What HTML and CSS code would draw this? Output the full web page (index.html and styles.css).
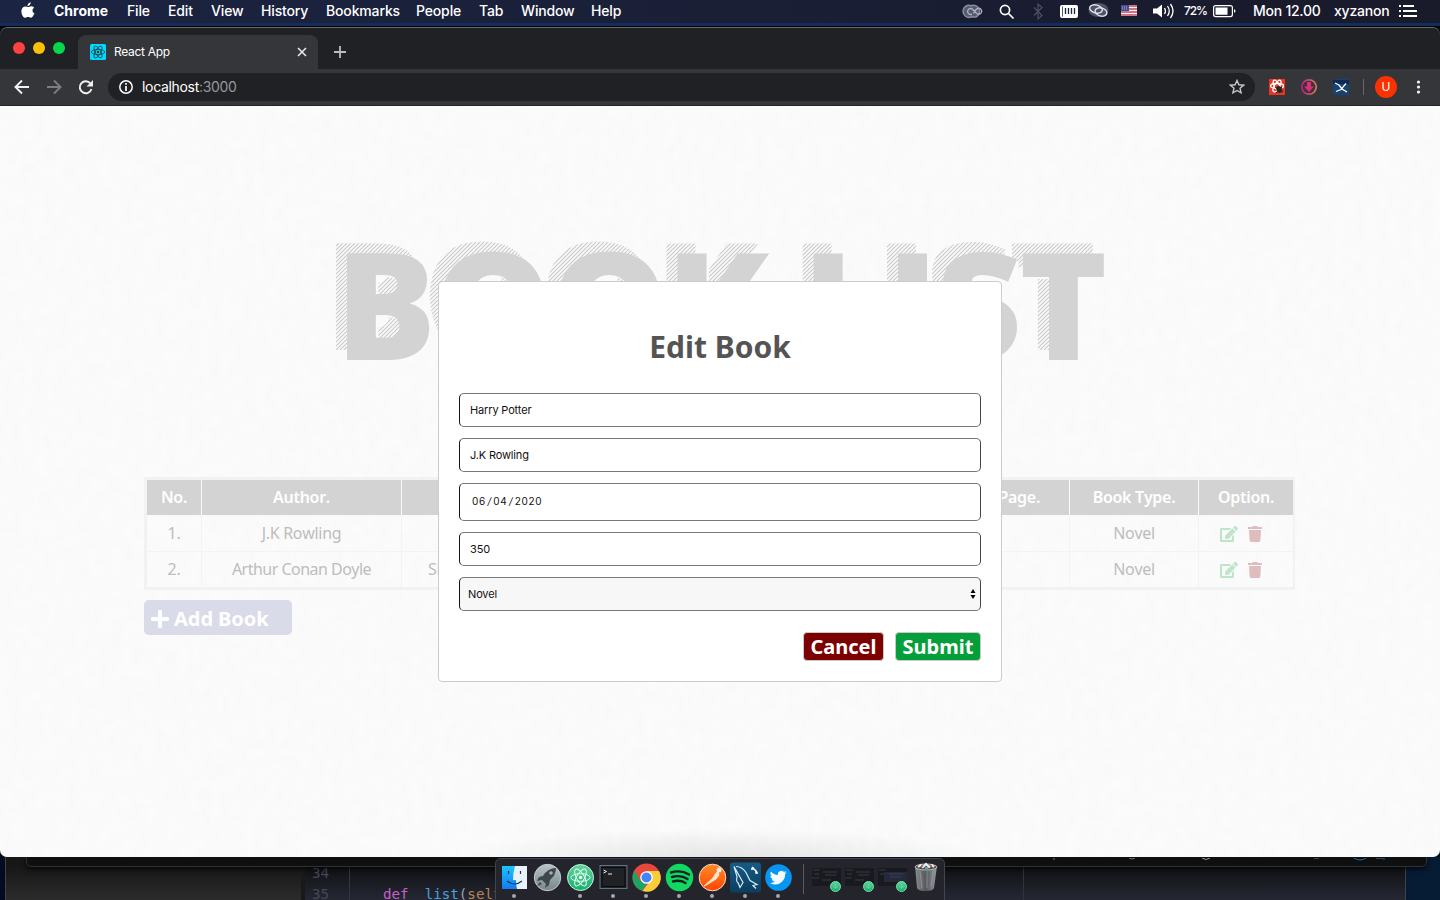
FILE: index.html
```html
<!DOCTYPE html>
<html lang="en">
<head>
<meta charset="utf-8">
<title>React App</title>
<link rel="stylesheet" href="styles.css">
</head>
<body>
<svg class="defs" width="0" height="0">
  <defs>
    <symbol id="edit" viewBox="0 0 576 512"><path d="M402.600 83.200l90.200 90.200c3.800 3.800 3.800 10 0 13.800L274.400 405.600l-92.800 10.300c-12.400 1.400-22.900-9.100-21.500-21.500l10.300-92.800L388.800 83.200c3.800-3.800 10-3.800 13.800 0zm162-22.900l-48.800-48.800c-15.200-15.200-39.900-15.200-55.200 0l-35.400 35.400c-3.800 3.800-3.800 10 0 13.800l90.200 90.200c3.800 3.800 10 3.800 13.800 0l35.400-35.400c15.200-15.300 15.200-40 0-55.200zM384 346.200V448H64V128h229.800c3.200 0 6.200-1.300 8.500-3.500l40-40c7.600-7.600 2.200-20.500-8.500-20.500H48C21.500 64 0 85.500 0 112v352c0 26.500 21.500 48 48 48h352c26.500 0 48-21.500 48-48V306.200c0-10.700-12.900-16-20.500-8.500l-40 40c-2.200 2.300-3.500 5.300-3.500 8.500z"/></symbol>
    <symbol id="trash" viewBox="0 0 448 512"><path d="M432 32H312l-9.400-18.700A24 24 0 0 0 281.100 0H166.800a23.700 23.700 0 0 0-21.400 13.300L136 32H16A16 16 0 0 0 0 48v32a16 16 0 0 0 16 16h416a16 16 0 0 0 16-16V48a16 16 0 0 0-16-16zM53.200 467a48 48 0 0 0 47.900 45h245.800a48 48 0 0 0 47.900-45L416 128H32z"/></symbol>
    <symbol id="atom" viewBox="-12 -12 24 24"><g fill="none" stroke="currentColor"><ellipse rx="10" ry="4"/><ellipse rx="10" ry="4" transform="rotate(60)"/><ellipse rx="10" ry="4" transform="rotate(120)"/></g><circle r="1.800" fill="currentColor"/></symbol>
    <linearGradient id="silver" x2="0" y2="1"><stop stop-color="#b7c3c5"/><stop offset="1" stop-color="#79868a"/></linearGradient>
    <linearGradient id="green" x2="0" y2="1"><stop stop-color="#60d59c"/><stop offset="1" stop-color="#15ae6c"/></linearGradient>
    <linearGradient id="orange" x2="0" y2="1"><stop stop-color="#ff8b28"/><stop offset="1" stop-color="#ff4600"/></linearGradient>
    <linearGradient id="blue" x2="0" y2="1"><stop stop-color="#155b87"/><stop offset="1" stop-color="#0b3e5f"/></linearGradient>
    <linearGradient id="finder" x2="0" y2="1"><stop stop-color="#19c6ff"/><stop offset="1" stop-color="#147bf0"/></linearGradient>
    <linearGradient id="can"><stop stop-color="#8b8e90"/><stop offset=".5" stop-color="#55585b"/><stop offset="1" stop-color="#9a9d9f"/></linearGradient>
    <linearGradient id="ring"><stop stop-color="#bd1e83"/><stop offset="1" stop-color="#d7775b"/></linearGradient>
  </defs>
</svg>

<header class="menubar">
  <svg class="apple" viewBox="0 0 14 17"><path fill="#fff" d="M9.700.300c.1 1-.3 1.900-.9 2.600-.6.700-1.400 1.200-2.300 1.100-.1-.9.300-1.800.9-2.500C8 .800 8.900.400 9.700.300zM12.800 12.600c-.7 1.500-1.700 3.200-3 3.200-1 0-1.400-.7-2.700-.7s-1.700.7-2.700.7C2 15.800.300 12.200.400 9c.1-2.900 1.900-4.600 3.900-4.600 1.200 0 2 .7 2.900.7.800 0 1.700-.8 3.200-.8 1.100 0 2.100.5 2.700 1.500-2.400 1.500-2 4.700.5 5.600z"/></svg>
  <nav class="menus">
    <b class="m1">Chrome</b><span class="m2">File</span><span class="m3">Edit</span><span class="m4">View</span><span class="m5">History</span><span class="m6">Bookmarks</span><span class="m7">People</span><span class="m8">Tab</span><span class="m9">Window</span><span>Help</span>
  </nav>
  <svg class="status" viewBox="0 0 280 23">
    <g fill="none" stroke="#8b8e9e"><path fill="#565b70" stroke-width="1.500" d="M9 5.700A6 6 0 1 0 9 17h5a6 6 0 1 0-5-11.300z"/><path stroke="#b0b2bf" stroke-width="1.300" d="M10 14.500H8.500a3 3 0 1 1 2-5.300l4.500 4.500a3 3 0 1 0 .5-5.200c-2 .5-3 3.500-4 5"/></g>
    <g fill="none" stroke="#fff" stroke-width="1.700"><circle cx="43" cy="10" r="4.600"/><path d="M46.500 13.500l5 5"/></g>
    <path d="M72 7.500l8 8-4 3.500V4l4 3.500-8 8" fill="none" stroke="#4b5065" stroke-width="1.200"/>
    <rect x="98" y="5" width="18" height="13" rx="2" fill="#fff"/><path d="M103.500 8v6m3-6v6m3-6v6m3-6v6" stroke="#20243a" stroke-width="1.300"/><path d="M100.500 6.500v10" stroke="#555b6d"/>
    <ellipse cx="136.500" cy="10" rx="10" ry="7" fill="#4d5365"/><g fill="none" stroke="#e2e4ed" stroke-width="1.400"><ellipse cx="134" cy="9" rx="6.500" ry="4" transform="rotate(15 134 9)"/><ellipse cx="139" cy="12" rx="6" ry="4" transform="rotate(15 139 12)"/></g>
    <path fill="#f4f2f6" d="M159 5h16v11h-16z"/><path d="M159 6h16m-16 3h16m-16 3h16m-16 3h16" stroke="#c44b5d" stroke-width="1.500"/><path fill="#434d8f" d="M159 5h8v6h-8z"/><path d="M160 7h6m-6 2h6" stroke="#a9afd4" stroke-dasharray="1"/>
    <path fill="#fff" d="M191 8.500h4l5-4v13l-5-4h-4z"/><path d="M202.500 8q2 3 0 6m3-8q3.500 5 0 10m3-12q5 7 0 14" stroke="#fff" stroke-width="1.300" fill="none"/>
    <text x="222" y="15" textLength="24">72%</text>
    <rect x="251.600" y="5.600" width="18.800" height="11" rx="2" fill="none" stroke="#fff" stroke-width="1.200"/><path fill="#fff" d="M253.500 7.500h12v7.300h-12zM272 9c2 1 2 3 0 4z"/>
  </svg>
  <span class="clock">Mon 12.00</span><span class="user">xyzanon</span>
  <svg class="list" viewBox="0 0 20 14"><path d="M1 2h2m-2 5h2m-2 5h2M5 2h11M5 7h14M5 12h14" stroke="#fff" stroke-width="2"/></svg>
</header>

<main class="window">
  <div class="tabs">
    <div class="lights"><i></i><i></i><i></i></div>
    <div class="tab"><svg class="favicon" viewBox="0 0 16 16"><rect width="16" height="16" rx="1.500" fill="#00d8ff"/><use href="#atom" color="#222" width="16" height="16"/></svg><span>React App</span><svg class="close" viewBox="0 0 10 10"><path d="M1 1l8 8M9 1L1 9" stroke="#e7e8ea" stroke-width="1.600"/></svg></div>
    <svg class="plus" viewBox="0 0 12 12"><path d="M6 0v12M0 6h12" stroke="#b9bdc1" stroke-width="1.800"/></svg>
  </div>
  <div class="toolbar">
    <svg class="navs" viewBox="0 0 82 20"><g fill="none" stroke="#f1f1f1" stroke-width="1.900"><path d="M15 10H2m6-6.500L1.500 10 8 16.500"/><path stroke="#7c7d80" d="M33 10h13m-6-6.500l6.500 6.500-6.500 6.500"/><path d="M77.500 12a6 6 0 1 1-1-5.500"/></g><path fill="#f1f1f1" d="M79 3v6.500h-6.500z"/></svg>
    <div class="address"><svg class="info" viewBox="0 0 14 14"><circle cx="7" cy="7" r="6.200" fill="none" stroke="#fff" stroke-width="1.500"/><path d="M7 3v1.700M7 6v5" stroke="#fff" stroke-width="1.700"/></svg><span>localhost<em>:3000</em></span><svg class="star" viewBox="0 0 16 16"><path d="M8 1.500l1.900 4.300 4.700.4-3.600 3 1.100 4.700L8 11.500l-4.100 2.400L5 9.200l-3.600-3 4.700-.4z" fill="none" stroke="#c5c6c8" stroke-width="1.400"/></svg></div>
    <svg class="extensions" viewBox="0 0 184 30">
      <g transform="translate(14 7)"><rect width="16" height="16" fill="#eb3323"/><g fill="none" stroke="#fff" stroke-width="1.300"><ellipse cx="8" cy="7" rx="6.500" ry="2.500"/><ellipse cx="8" cy="7" rx="6.500" ry="2.500" transform="rotate(60 8 7)"/><ellipse cx="8" cy="7" rx="6.500" ry="2.500" transform="rotate(120 8 7)"/></g><ellipse cx="10" cy="10.500" rx="2.800" ry="3.600" fill="#252525" transform="rotate(-25 10 10)"/><path d="M6 8l8 5m-7 1l6-6" stroke="#252525"/></g>
      <circle cx="54" cy="15" r="7.200" fill="none" stroke="url(#ring)" stroke-width="1.700"/><path d="M52 10h4v4.500h3L54 20l-5-5.500h3z" fill="#df2c79"/>
      <g transform="translate(78 7)"><rect width="16" height="16" rx="1" fill="#164373"/><path d="M0 1h16v4H0z" fill="#0c2958"/><path d="M2 4l4 2 3 4 5 3M3 12.500l5-2 5-6" stroke="#fff" stroke-width="1.300" fill="none"/></g>
      <path d="M108.500 7v16" stroke="#66676b"/><circle cx="131" cy="15" r="11" fill="#fb3100"/><text x="131" y="19" text-anchor="middle">U</text>
      <g fill="#f4f4f4"><circle cx="163.500" cy="10" r="1.600"/><circle cx="163.500" cy="15" r="1.600"/><circle cx="163.500" cy="20" r="1.600"/></g>
    </svg>
  </div>
  <section class="page">
    <svg class="paper"><filter id="grain"><feTurbulence type="fractalNoise" baseFrequency=".09 .07" numOctaves="5" seed="4"/><feColorMatrix values="0 0 0 0 .6  0 0 0 0 .6  0 0 0 0 .6  .08 0 0 0 -.025"/></filter><rect width="100%" height="100%" filter="url(#grain)"/></svg>
    <svg class="title" viewBox="0 0 800 150" role="heading" aria-label="Book List">
      <pattern id="hatch" width="4" height="4" patternUnits="userSpaceOnUse"><path d="M-1 1l2-2M0 4l4-4M3 5l2-2" stroke="#c9c9c9" stroke-width="1.150"/></pattern>
      <text x="4.500" y="120" textLength="772" fill="url(#hatch)">BOOK LIST</text>
      <text x="18" y="132" textLength="772" fill="#fafafa">BOOK LIST</text>
      <text x="15.500" y="130" textLength="772" fill="#d3d3d3">BOOK LIST</text>
    </svg>
    <div class="table">
      <div class="row head"><span>No.</span><span>Author.</span><span></span><span class="count">Total Page.</span><span>Book Type.</span><span>Option.</span></div>
      <div class="row"><span>1.</span><span>J.K Rowling</span><span></span><span></span><span>Novel</span><span class="options"><svg class="edit"><use href="#edit"/></svg><svg class="trash"><use href="#trash"/></svg></span></div>
      <div class="row last"><span>2.</span><span class="author">Arthur Conan Doyle</span><span class="name">Sherlock Holmes</span><span></span><span>Novel</span><span class="options"><svg class="edit"><use href="#edit"/></svg><svg class="trash"><use href="#trash"/></svg></span></div>
    </div>
    <div class="add"><svg viewBox="0 0 18 18"><path d="M9 1.800v14.400M1.800 9h14.400" stroke="#fff" stroke-width="4" stroke-linecap="round"/></svg><span>Add Book</span></div>
    <form class="modal">
      <h2>Edit Book</h2>
      <div class="field">Harry Potter</div>
      <div class="field">J.K Rowling</div>
      <div class="field date">06<i>/</i>04<i>/</i>2020</div>
      <div class="field">350</div>
      <div class="field select"><span>Novel</span><svg viewBox="0 0 6 12"><path d="M.500 5L3 1l2.500 4zM.500 7L3 11l2.500-4z"/></svg></div>
      <div class="actions"><div class="button cancel">Cancel</div><div class="button submit">Submit</div></div>
    </form>
  </section>
</main>

<footer class="behind">
  <div class="editor"><div class="sidebar"></div><div class="gutter"><span>34</span><span>35</span></div><div class="code"><b>def</b><u>list</u>(<em>self</em></div></div>
  <div class="lower"></div>
  <svg class="remnants" viewBox="0 0 340 4"><path d="M3 0v2m75-2l3 1 3-1m179 0h5m57 0h7" stroke="#777"/><path d="M151 0q4 3 8 0" stroke="#999" fill="none"/><path d="M303 0q6 4 12 0m18 0v2" stroke="#246a9c" fill="none"/></svg>
</footer>
<svg class="dock" viewBox="495 858 450 42">
  <rect x="495.500" y="858.500" width="449" height="50" rx="5" fill="#23242c" stroke="#43454d"/>
  <g><rect x="502" y="866" width="25" height="23" fill="url(#finder)"/><path d="M515 866h12v23h-10q-1-5-1-9h-3q0-8 2-14z" fill="#e8f2fb"/><path d="M508.500 871v3m12-3v3M507 881q7.500 6 15 0" fill="none" stroke="#173450" stroke-width="1.200"/></g>
  <g><circle cx="547.500" cy="877.500" r="13.200" fill="url(#silver)" stroke="#c5cccd"/><path d="M556 868q-8 0-13 8l-4 1-2 4 5-1 4 4-1 4 4-3 1-5q6-5 6-12z" fill="#3d474c"/><circle cx="551" cy="873" r="1.800" fill="#a5afb2"/><path d="M540 882l-3 4 5-2z" fill="#3d474c"/></g>
  <g><circle cx="580.500" cy="877.500" r="13" fill="url(#green)" stroke="#c9f5df"/><svg x="569" y="866" width="23" height="23" color="#e9fff5"><use href="#atom"/></svg></g>
  <g><rect x="600" y="865.500" width="27" height="23" fill="#20242b" stroke="#65717d"/><rect x="602" y="867.500" width="23" height="19" fill="#202226" stroke="#08090a"/><path d="M603.500 870l3 1.500-3 1.500m4.500 1h4" fill="none" stroke="#eee"/></g>
  <g><circle cx="646.500" cy="877.500" r="14" fill="#e8483b"/><path d="M634.400 870.500l6.100 10.500 6 3.500-4 6.400A14 14 0 0 1 634.400 870.500z" fill="#1ea362"/><path d="M646.500 871h12.500a14 14 0 0 1-16.500 20l6.500-8.500z" fill="#fccd3b"/><circle cx="646.500" cy="877.500" r="6.300" fill="#fff"/><circle cx="646.500" cy="877.500" r="5" fill="#4286f5"/></g>
  <g><circle cx="679.500" cy="877.500" r="13.700" fill="#10d863"/><path d="M671 872.500q10-3 18 2m-17 2.500q9-2.500 15.500 2m-14.500 2.500q7-2 12.500 1.500" fill="none" stroke="#19221d" stroke-width="2.400" stroke-linecap="round"/></g>
  <g><circle cx="712.500" cy="877.500" r="13.300" fill="url(#orange)" stroke="#f8dfc7"/><path d="M704 886l9-8 3-5 2-1 1 3-3 4-8 5z" fill="#ffe4ce" stroke="#ffe4ce"/><circle cx="719" cy="870" r="2.500" fill="#ffe9da"/></g>
  <g><rect x="730" y="862.500" width="31" height="30" rx="3" fill="url(#blue)"/><path d="M736 866.500q6 0 10 6l4 8 7 4-4 1 3 3m-13-6l-3 5-2-5q-2 0-1-6l-3-10z" fill="none" stroke="#d9edf8" stroke-width="1.200"/><path d="M752 867l5 5m-4-5v2h-2m5 2v2h2" stroke="#fff" stroke-width="1.500" fill="none"/></g>
  <g><circle cx="778.500" cy="877.500" r="13.300" fill="#0795f2"/><path transform="translate(770 869) scale(.7)" d="M23.600 4.900a10 10 0 0 1-2.800.8 4.900 4.900 0 0 0 2.200-2.700 10 10 0 0 1-3.100 1.200 4.900 4.900 0 0 0-8.400 4.500A14 14 0 0 1 1.400 3.500a4.900 4.900 0 0 0 1.500 6.600 5 5 0 0 1-2.200-.6c0 2.300 1.600 4.400 3.900 4.900a5 5 0 0 1-2.200.1 4.900 4.900 0 0 0 4.600 3.400A10 10 0 0 1 0 19.900a14 14 0 0 0 21.500-12.400c1-.7 1.600-1.600 2.100-2.600z" fill="#f5fcff"/></g>
  <path d="M803.500 864v30" stroke="#5a5b61"/>
  <g fill="#191a20"><path d="M812 868h29v18h-29zM845 868h29v18h-29zM878 868h29v18h-29z"/></g><path fill="#222a3c" d="M884 872h23v10h-23z"/><path d="M813 870h7m3 2h14m-23 2h5m6 1h11m-24 3h7m3 2h9M846 870h7m3 2h14m-23 2h5m6 1h11m-24 3h7m3 2h9M879 870h7m3 4h14m-23 0h4m6 3h11" stroke="#474954" stroke-width=".7"/>
  <g fill="url(#green)" stroke="#79dca9"><circle cx="835.500" cy="886.500" r="5"/><circle cx="868.500" cy="886.500" r="5"/><circle cx="901.500" cy="886.500" r="5"/></g><path d="M833 887h5m-2.500-3v5m30.500-2h5m-2.500-3v5m30.500-2h5m-2.500-3v5" stroke="#80e4b1" stroke-width=".5"/>
  <g><path d="M915 866h22l-3 22q-1 3-8.500 3t-8.500-3z" fill="url(#can)"/><ellipse cx="926" cy="867" rx="11" ry="3" fill="#4d5051" stroke="#b5b8b8"/><path d="M918 867l3-2 2 2 3-3 3 3 3-2 2 2" stroke="#eee" stroke-width="2" fill="none"/><path d="M921 866h2m7 0h2" stroke="#bd6c4e" stroke-width="2"/><path d="M925 868h3" stroke="#4eabc4" stroke-width="2"/><path d="M920 871l2 17m5-17v17m6-17l-2 16" stroke="#a6a9ab" stroke-width=".6"/></g>
  <g fill="#a6a7ad"><circle cx="514" cy="896" r="2"/><circle cx="580" cy="896" r="2"/><circle cx="613" cy="896" r="2"/><circle cx="646" cy="896" r="2"/><circle cx="679" cy="896" r="2"/><circle cx="712" cy="896" r="2"/><circle cx="745" cy="896" r="2"/><circle cx="778" cy="896" r="2"/></g>
</svg>
</body>
</html>
```
FILE: styles.css
```css
* { box-sizing: border-box; }
body { margin: 0; width: 1440px; height: 900px; overflow: hidden; display: flex; flex-direction: column; background: #020c20; font-family: Inter, sans-serif; }
svg { display: block; flex: none; }
.defs { position: absolute; }
.menubar { flex: none; height: 27px; display: flex; align-items: flex-start; color: #fff; font-size: 14px; line-height: 21px; font-weight: 500; background: linear-gradient(#0000 23px, #000 26px), linear-gradient(90deg, #1b2442, #191a2a); padding-left: 21px; border-bottom: 1px solid #000; box-shadow: inset 0 -3px #122c5c; }
.apple { width: 14px; height: 17px; margin: 2px 19px 0 0; }
.menus { display: flex; width: 908px; letter-spacing: -.15px; }
.menus > * { flex: none; }
.menus b { font-weight: 700; letter-spacing: 0; }
.m1 { width: 73px; } .m2 { width: 41px; } .m3 { width: 43px; } .m4 { width: 50px; } .m5 { width: 65px; }
.m6 { width: 90px; } .m7 { width: 63px; } .m8 { width: 42px; } .m9 { width: 70px; }
.status { width: 280px; height: 23px; }
.status text { font: 500 12px Inter, sans-serif; fill: #fff; }
.clock { width: 81px; margin-left: 11px; white-space: nowrap; letter-spacing: -.25px; }
.user { width: 64px; letter-spacing: -.2px; }
.list { width: 20px; height: 14px; margin-top: 4px; }
.window { flex: none; height: 830px; border-radius: 7px; overflow: hidden; background: #202124; position: relative; z-index: 2; }
.tabs { height: 42px; display: flex; align-items: flex-end; box-shadow: inset 0 1px #66686a; border-radius: 7px 7px 0 0; }
.lights { width: 78px; height: 27px; padding-left: 13px; display: flex; gap: 8px; }
.lights i { width: 12px; height: 12px; border-radius: 50%; background: #ff4141; }
.lights i:nth-child(2) { background: #ffc009; }
.lights i:nth-child(3) { background: #07d64d; }
.tab { width: 240px; height: 34px; background: #35363a; border-radius: 8px 8px 0 0; display: flex; align-items: center; padding: 0 11px 0 12px; color: #fff; font-size: 12px; }
.tab span { margin: -2px 0 0 8px; flex: 1; letter-spacing: -.3px; }
.favicon { width: 16px; height: 16px; }
.close { width: 10px; height: 10px; }
.plus { width: 12px; height: 12px; margin: 0 0 11px 16px; }
.toolbar { height: 37px; background: #35363a; border-bottom: 1px solid #232427; display: flex; align-items: center; padding-left: 14px; }
.navs { width: 82px; height: 20px; }
.address { width: 1147px; height: 28px; border-radius: 14px; margin-left: 12px; background: #202124; display: flex; align-items: center; padding: 0 10px 0 11px; color: #fff; font-size: 14px; }
.address span { margin: -1px 0 0 9px; flex: 1; letter-spacing: -.32px; }
.address em { font-style: normal; color: #96989b; }
.info { width: 14px; height: 14px; }
.star { width: 16px; height: 16px; }
.extensions { width: 184px; height: 30px; }
.extensions text { font: 12px Inter, sans-serif; fill: #fff; }
.page { height: 751px; position: relative; background: radial-gradient(ellipse 260px 28px at 50% 100%, #e5e5e5, #e5e5e500), #fbfbfb; padding: 124px 144px 0; }
.paper { position: absolute; inset: 0; width: 100%; height: 100%; pointer-events: none; }
.title { position: relative; width: 800px; height: 150px; margin: 0 0 97px 176px; overflow: visible; }
.title text { font: 800 149.3px "Open Sans", sans-serif; }
.table { position: relative; width: 1151px; border: 3px solid #f2f2f2; border-right-width: 2px; font: 16px "Noto Sans", sans-serif; color: #bdbdbd; font-kerning: none; }
.row { display: grid; grid-template-columns: 54px 200px 527px 141px 129px 95px; height: 36px; line-height: 35px; }
.row > span { border: solid #f3f3f3; border-width: 0 0 1px 1px; text-align: center; white-space: nowrap; letter-spacing: -.3px; }
.row > span:first-child { border-left: 0; }
.row.last { height: 35px; }
.row.last > span { border-bottom: 0; }
.row .author { letter-spacing: -.52px; }
.head { background: #d3d3d3; color: #fff; font-weight: 600; }
.head > span { border-color: #fafafa; }
.row .count { text-align: right; padding-right: 29px; }
.row .name { text-align: left; padding-left: 26px; }
.row .options { display: flex; justify-content: center; align-items: center; gap: 10px; padding-right: 10px; }
.edit { width: 18px; height: 16px; fill: #bce5ca; }
.trash { width: 14px; height: 16px; fill: #dfbcbe; }
.add { position: relative; width: 148px; height: 35px; margin-top: 10px; border-radius: 5px; background: #d9dbe8; color: #fff; display: flex; align-items: center; padding-left: 7px; gap: 5px; font: 700 20px "Noto Sans", sans-serif; }
.add svg { width: 18px; height: 18px; margin-top: 3px; }
.add span { margin-top: 2px; letter-spacing: -.05px; }
.modal { position: absolute; left: 438px; top: 175px; width: 564px; height: 401px; border: 1px solid #ccc; border-radius: 4px; background: #fff; padding: 0 20px; }
.modal h2 { margin: 0 0 24px; padding-top: 44px; height: 87px; text-align: center; color: #545454; font: 700 30px/42px "Noto Sans", sans-serif; }
.field { height: 34px; margin-bottom: 11px; border: 1px solid #777; border-left-color: #111; border-right-color: #444; border-radius: 5px; padding-left: 10px; font-size: 11px; line-height: 33px; color: #111; letter-spacing: -.15px; }
.date { height: 38px; line-height: 35px; font-size: 10px; letter-spacing: .65px; padding-left: 12px; }
.date i { margin: 0 1.6px; }
.select { display: flex; align-items: center; justify-content: space-between; background: #f7f7f7; padding: 0 4px 0 8px; }
.select svg { width: 6px; height: 12px; }
.actions { display: flex; justify-content: flex-end; gap: 11px; margin-top: 21px; }
.button { height: 29px; width: 81px; border-radius: 4px; border: 1px solid #c9c9c9; text-align: center; color: #fff; font: 700 20px/28px "Noto Sans", sans-serif; }
.cancel { background: #7d0000; }
.submit { width: 86px; background: #049e3a; }
.behind { flex: 1; position: relative; background: linear-gradient(90deg, #020c20, #061b34); }
.editor { width: 1401px; height: 43px; margin-left: 5px; display: flex; background: linear-gradient(#101114 10px, #252833); border: solid #404248; border-width: 0 1px; font: 14.2px/21px "DejaVu Sans Mono", monospace; }
.sidebar { width: 299px; background: linear-gradient(#171717 10px, #2c2c2c); border-right: 4px solid #191919; }
.gutter { width: 45px; padding: 6px 0 0 7px; color: #434957; border-right: 1px solid #343741; display: flex; flex-direction: column; }
.code { width: 674px; padding: 27px 0 0 33px; color: #9aa1ae; border-right: 1px solid #30333a; }
.code b { color: #c85fd0; font-weight: 400; margin-right: 16px; }
.code u { color: #4aa0db; text-decoration: none; }
.code em { color: #bd834e; font-style: normal; }
.lower { position: absolute; left: 26px; top: 0; width: 1401px; height: 10px; background: #0e0f10; border: 1px solid #303133; border-top: 0; border-radius: 0 0 5px 5px; box-shadow: 0 2px 5px #000b; }
.remnants { position: absolute; left: 1051px; top: 1px; width: 340px; height: 4px; }
.dock { position: absolute; z-index: 3; left: 495px; bottom: 0; width: 450px; height: 42px; }
```
